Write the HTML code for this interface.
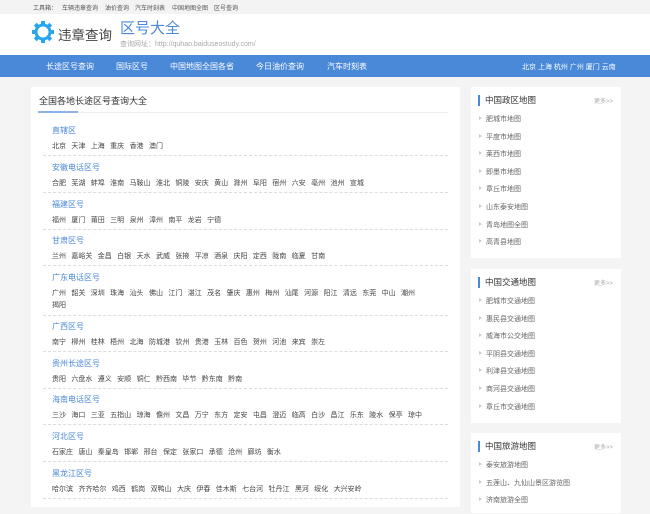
<!DOCTYPE html>
<html><head><meta charset="utf-8"><style>
*{margin:0;padding:0;box-sizing:border-box}
body{width:650px;height:500px;overflow:hidden;background:#f4f4f4;font-family:"Liberation Sans","Noto Sans CJK SC",sans-serif;position:relative}
.a{position:absolute;white-space:nowrap}
.top{position:absolute;left:0;top:0;width:650px;height:14px;background:#f3f3f3;font-size:6px;color:#555}
.hdr{position:absolute;left:0;top:14px;width:650px;height:41px;background:#fff}
.nav{position:absolute;left:0;top:55px;width:650px;height:22px;background:#4a88d8;color:#fff;font-size:8px}
.main{position:absolute;left:31px;top:87px;width:429px;height:420px;background:#fff}
.sec{position:absolute;left:12px;width:405px;border-bottom:1px dashed #ddd;height:32px}
.sec h3{position:absolute;left:9px;top:0;font-size:8px;font-weight:normal;color:#4a88d8;line-height:14px}
.sec p{position:absolute;left:9px;top:17px;width:385px;font-size:7px;color:#444;line-height:12px;white-space:normal}
.sec p span{margin-right:5.4px;display:inline-block;white-space:nowrap}
.box{position:absolute;left:471px;width:150px;background:#fff}
.box h4{position:absolute;left:7px;top:8px;border-left:2px solid #4a88d8;padding-left:5px;font-size:8.5px;font-weight:normal;color:#333;line-height:11px;white-space:nowrap}
.box .m{position:absolute;right:8px;top:9px;font-size:6px;color:#aaa}
.box ul{position:absolute;left:8px;top:28px;list-style:none}
.box li{font-size:7px;color:#666;height:17.6px;line-height:10px;white-space:nowrap}
.box li:before{content:"";display:inline-block;border-left:3px solid #ccc;border-top:2px solid transparent;border-bottom:2px solid transparent;margin-right:4px;vertical-align:1px}
</style></head><body>
<div class="top"><span class="a" style="left:33px;top:3px">工具箱：</span><span class="a" style="left:62px;top:3px">车辆违章查询</span><span class="a" style="left:105px;top:3px">油价查询</span><span class="a" style="left:135px;top:3px">汽车时刻表</span><span class="a" style="left:172px;top:3px">中国地图全图</span><span class="a" style="left:214px;top:3px">区号查询</span></div>
<div class="hdr">
<svg class="a" style="left:32px;top:7px" width="22" height="22" viewBox="-11 -11 22 22"><g fill="#2aa6ee"><circle r="8.5"/><g id="t"><rect x="-2" y="-11" width="4" height="4"/></g><use href="#t" transform="rotate(45)"/><use href="#t" transform="rotate(90)"/><use href="#t" transform="rotate(135)"/><use href="#t" transform="rotate(180)"/><use href="#t" transform="rotate(225)"/><use href="#t" transform="rotate(270)"/><use href="#t" transform="rotate(315)"/></g><circle r="5.5" fill="#fff"/></svg>
<span class="a" style="left:58px;top:10px;font-size:13.5px;color:#444">违章查询</span>
<span class="a" style="left:120px;top:3px;font-size:15px;color:#4a88d8">区号大全</span>
<span class="a" style="left:120px;top:25px;font-size:7px;color:#aaa">查询网址：http://quhao.baiduseostudy.com/</span>
</div>
<div class="nav"><span class="a" style="left:46px;top:6px">长途区号查询</span><span class="a" style="left:116px;top:6px">国际区号</span><span class="a" style="left:170px;top:6px">中国地图全国各省</span><span class="a" style="left:256px;top:6px">今日油价查询</span><span class="a" style="left:327px;top:6px">汽车时刻表</span><span class="a" style="left:522px;top:7px;font-size:7px">北京 上海 杭州 广州 厦门 云南</span></div>
<div class="main">
<span class="a" style="left:8px;top:7px;font-size:9px;color:#333">全国各地长途区号查询大全</span>
<div class="a" style="left:7px;top:25px;width:410px;height:1px;background:#eee"></div>
<div class="a" style="left:7px;top:24px;width:40px;height:2px;background:#8ab4e8"></div>
<div class="sec" style="top:37px"><h3>直辖区</h3><p><span>北京</span><span>天津</span><span>上海</span><span>重庆</span><span>香港</span><span>澳门</span></p></div>
<div class="sec" style="top:74px"><h3>安徽电话区号</h3><p><span>合肥</span><span>芜湖</span><span>蚌埠</span><span>淮南</span><span>马鞍山</span><span>淮北</span><span>铜陵</span><span>安庆</span><span>黄山</span><span>滁州</span><span>阜阳</span><span>宿州</span><span>六安</span><span>亳州</span><span>池州</span><span>宣城</span></p></div>
<div class="sec" style="top:111px"><h3>福建区号</h3><p><span>福州</span><span>厦门</span><span>莆田</span><span>三明</span><span>泉州</span><span>漳州</span><span>南平</span><span>龙岩</span><span>宁德</span></p></div>
<div class="sec" style="top:147px"><h3>甘肃区号</h3><p><span>兰州</span><span>嘉峪关</span><span>金昌</span><span>白银</span><span>天水</span><span>武威</span><span>张掖</span><span>平凉</span><span>酒泉</span><span>庆阳</span><span>定西</span><span>陇南</span><span>临夏</span><span>甘南</span></p></div>
<div class="sec" style="top:184px;height:45px"><h3>广东电话区号</h3><p style="width:378px"><span>广州</span><span>韶关</span><span>深圳</span><span>珠海</span><span>汕头</span><span>佛山</span><span>江门</span><span>湛江</span><span>茂名</span><span>肇庆</span><span>惠州</span><span>梅州</span><span>汕尾</span><span>河源</span><span>阳江</span><span>清远</span><span>东莞</span><span>中山</span><span>潮州</span> <span>揭阳</span></p></div>
<div class="sec" style="top:233px"><h3>广西区号</h3><p><span>南宁</span><span>柳州</span><span>桂林</span><span>梧州</span><span>北海</span><span>防城港</span><span>钦州</span><span>贵港</span><span>玉林</span><span>百色</span><span>贺州</span><span>河池</span><span>来宾</span><span>崇左</span></p></div>
<div class="sec" style="top:270px"><h3>贵州长途区号</h3><p><span>贵阳</span><span>六盘水</span><span>遵义</span><span>安顺</span><span>铜仁</span><span>黔西南</span><span>毕节</span><span>黔东南</span><span>黔南</span></p></div>
<div class="sec" style="top:306px"><h3>海南电话区号</h3><p><span>三沙</span><span>海口</span><span>三亚</span><span>五指山</span><span>琼海</span><span>儋州</span><span>文昌</span><span>万宁</span><span>东方</span><span>定安</span><span>屯昌</span><span>澄迈</span><span>临高</span><span>白沙</span><span>昌江</span><span>乐东</span><span>陵水</span><span>保亭</span><span>琼中</span></p></div>
<div class="sec" style="top:343px"><h3>河北区号</h3><p><span>石家庄</span><span>唐山</span><span>秦皇岛</span><span>邯郸</span><span>邢台</span><span>保定</span><span>张家口</span><span>承德</span><span>沧州</span><span>廊坊</span><span>衡水</span></p></div>
<div class="sec" style="top:380px"><h3>黑龙江区号</h3><p><span>哈尔滨</span><span>齐齐哈尔</span><span>鸡西</span><span>鹤岗</span><span>双鸭山</span><span>大庆</span><span>伊春</span><span>佳木斯</span><span>七台河</span><span>牡丹江</span><span>黑河</span><span>绥化</span><span>大兴安岭</span></p></div>
</div>
<div class="box" style="top:87px;height:171px"><h4>中国政区地图</h4><span class="m">更多>></span><ul><li>肥城市地图</li><li>平度市地图</li><li>莱西市地图</li><li>即墨市地图</li><li>章丘市地图</li><li>山东泰安地图</li><li>青岛地图全图</li><li>高青县地图</li></ul></div>
<div class="box" style="top:269px;height:154px"><h4>中国交通地图</h4><span class="m">更多>></span><ul><li>肥城市交通地图</li><li>惠民县交通地图</li><li>威海市公交地图</li><li>平阴县交通地图</li><li>利津县交通地图</li><li>商河县交通地图</li><li>章丘市交通地图</li></ul></div>
<div class="box" style="top:433px;height:80px"><h4>中国旅游地图</h4><span class="m">更多>></span><ul><li>泰安旅游地图</li><li>五莲山、九仙山景区游览图</li><li>济南旅游全图</li></ul></div>
</body></html>
